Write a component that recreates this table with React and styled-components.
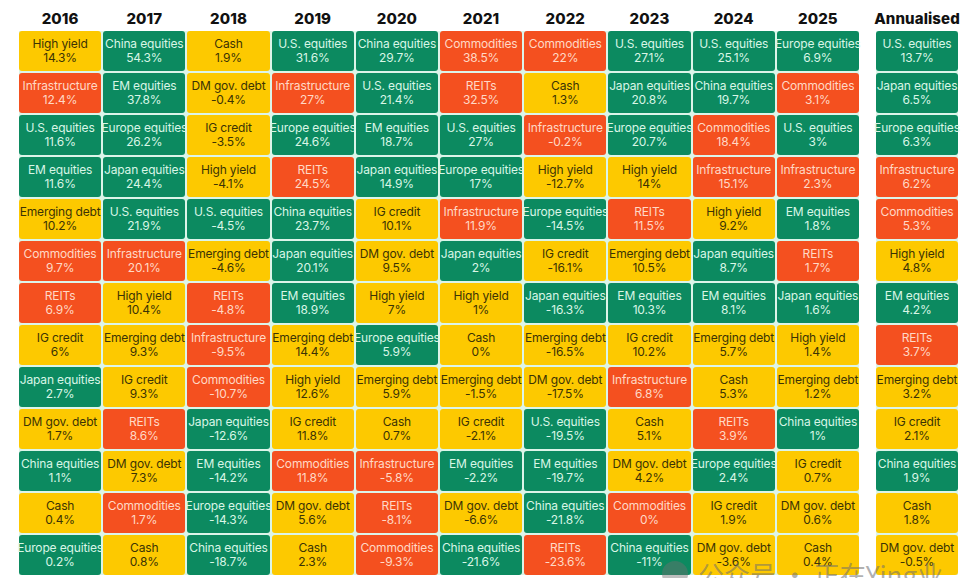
import React from 'react';
import styled, { createGlobalStyle } from 'styled-components';

const GlobalStyle = createGlobalStyle`
  html, body { margin: 0; padding: 0; background: #ffffff; }
  body { font-family: Inter, "Noto Sans", sans-serif; }
`;

const RED = ['Infrastructure', 'Commodities', 'REITs'];
const YELLOW = ['High yield', 'Cash', 'DM gov. debt', 'IG credit', 'Emerging debt'];

const kindOf = (name) => {
  if (RED.includes(name)) return 'red';
  if (YELLOW.includes(name)) return 'yellow';
  return 'green';
};

const parse = (txt) =>
  txt.split(';').map((s) => {
    const [name, value] = s.split('|');
    return { name: name.trim(), value: value.trim() };
  });

const years = [
  ['2016', 'High yield|14.3%;Infrastructure|12.4%;U.S. equities|11.6%;EM equities|11.6%;Emerging debt|10.2%;Commodities|9.7%;REITs|6.9%;IG credit|6%;Japan equities|2.7%;DM gov. debt|1.7%;China equities|1.1%;Cash|0.4%;Europe equities|0.2%'],
  ['2017', 'China equities|54.3%;EM equities|37.8%;Europe equities|26.2%;Japan equities|24.4%;U.S. equities|21.9%;Infrastructure|20.1%;High yield|10.4%;Emerging debt|9.3%;IG credit|9.3%;REITs|8.6%;DM gov. debt|7.3%;Commodities|1.7%;Cash|0.8%'],
  ['2018', 'Cash|1.9%;DM gov. debt|-0.4%;IG credit|-3.5%;High yield|-4.1%;U.S. equities|-4.5%;Emerging debt|-4.6%;REITs|-4.8%;Infrastructure|-9.5%;Commodities|-10.7%;Japan equities|-12.6%;EM equities|-14.2%;Europe equities|-14.3%;China equities|-18.7%'],
  ['2019', 'U.S. equities|31.6%;Infrastructure|27%;Europe equities|24.6%;REITs|24.5%;China equities|23.7%;Japan equities|20.1%;EM equities|18.9%;Emerging debt|14.4%;High yield|12.6%;IG credit|11.8%;Commodities|11.8%;DM gov. debt|5.6%;Cash|2.3%'],
  ['2020', 'China equities|29.7%;U.S. equities|21.4%;EM equities|18.7%;Japan equities|14.9%;IG credit|10.1%;DM gov. debt|9.5%;High yield|7%;Europe equities|5.9%;Emerging debt|5.9%;Cash|0.7%;Infrastructure|-5.8%;REITs|-8.1%;Commodities|-9.3%'],
  ['2021', 'Commodities|38.5%;REITs|32.5%;U.S. equities|27%;Europe equities|17%;Infrastructure|11.9%;Japan equities|2%;High yield|1%;Cash|0%;Emerging debt|-1.5%;IG credit|-2.1%;EM equities|-2.2%;DM gov. debt|-6.6%;China equities|-21.6%'],
  ['2022', 'Commodities|22%;Cash|1.3%;Infrastructure|-0.2%;High yield|-12.7%;Europe equities|-14.5%;IG credit|-16.1%;Japan equities|-16.3%;Emerging debt|-16.5%;DM gov. debt|-17.5%;U.S. equities|-19.5%;EM equities|-19.7%;China equities|-21.8%;REITs|-23.6%'],
  ['2023', 'U.S. equities|27.1%;Japan equities|20.8%;Europe equities|20.7%;High yield|14%;REITs|11.5%;Emerging debt|10.5%;EM equities|10.3%;IG credit|10.2%;Infrastructure|6.8%;Cash|5.1%;DM gov. debt|4.2%;Commodities|0%;China equities|-11%'],
  ['2024', 'U.S. equities|25.1%;China equities|19.7%;Commodities|18.4%;Infrastructure|15.1%;High yield|9.2%;Japan equities|8.7%;EM equities|8.1%;Emerging debt|5.7%;Cash|5.3%;REITs|3.9%;Europe equities|2.4%;IG credit|1.9%;DM gov. debt|-3.6%'],
  ['2025', 'Europe equities|6.9%;Commodities|3.1%;U.S. equities|3%;Infrastructure|2.3%;EM equities|1.8%;REITs|1.7%;Japan equities|1.6%;High yield|1.4%;Emerging debt|1.2%;China equities|1%;IG credit|0.7%;DM gov. debt|0.6%;Cash|0.4%'],
].map(([year, txt]) => ({ year, cells: parse(txt) }));

const annualised = parse(
  'U.S. equities|13.7%;Japan equities|6.5%;Europe equities|6.3%;Infrastructure|6.2%;Commodities|5.3%;High yield|4.8%;EM equities|4.2%;REITs|3.7%;Emerging debt|3.2%;IG credit|2.1%;China equities|1.9%;Cash|1.8%;DM gov. debt|-0.5%'
);

const palette = {
  green: { bg: '#0c8a60', fg: '#d9f6e6' },
  yellow: { bg: '#fdc900', fg: '#3b3305' },
  red: { bg: '#f4501f', fg: '#ffd9c6' },
};

const Page = styled.div`
  position: relative;
  width: 975px;
  height: 578px;
  overflow: hidden;
  display: flex;
  gap: 17px;
  padding-left: 19px;
  box-sizing: border-box;
`;

const Table = styled.div`
  display: flex;
  flex-direction: column;
  flex: none;
  width: ${(p) => p.$width}px;
`;

const HeaderRow = styled.div`
  display: grid;
  grid-template-columns: repeat(${(p) => p.$cols}, minmax(0, 1fr));
  column-gap: 2px;
  height: 31px;
`;

const Heading = styled.div`
  display: flex;
  align-items: center;
  justify-content: center;
  padding-top: 5px;
  font-size: 15px;
  font-weight: 800;
  color: #111;
  white-space: nowrap;
  letter-spacing: 0.1px;
`;

const Body = styled.div`
  display: grid;
  grid-template-columns: repeat(${(p) => p.$cols}, minmax(0, 1fr));
  grid-template-rows: repeat(13, 40px);
  grid-auto-flow: column;
  gap: 2px;
  background: #dcf5e9;
`;

const Cell = styled.div`
  min-width: 0;
  display: flex;
  flex-direction: column;
  align-items: center;
  justify-content: center;
  border-radius: 3px;
  background: ${(p) => palette[p.$kind].bg};
  color: ${(p) => palette[p.$kind].fg};
  font-size: 12px;
  line-height: 14px;
  letter-spacing: -0.15px;
  white-space: nowrap;
  padding-bottom: 1px;
`;

const Watermark = styled.div`
  position: absolute;
  left: 662px;
  top: 555px;
  display: flex;
  align-items: center;
  gap: 10px;
  color: rgba(110, 110, 110, 0.55);
  font-family: "Noto Sans CJK SC", "Noto Sans", sans-serif;
  font-size: 26px;
  white-space: nowrap;
  pointer-events: none;
`;

const Bubble = styled.span`
  width: 26px;
  height: 26px;
  border-radius: 50%;
  background: rgba(110, 110, 110, 0.45);
`;

function Column({ cells }) {
  return cells.map((c, i) => (
    <Cell key={i} $kind={kindOf(c.name)}>
      <span>{c.name}</span>
      <span>{c.value}</span>
    </Cell>
  ));
}

export default function App() {
  return (
    <>
      <GlobalStyle />
      <Page>
        <Table $width={840}>
          <HeaderRow $cols={10}>
            {years.map((y) => (
              <Heading key={y.year}>{y.year}</Heading>
            ))}
          </HeaderRow>
          <Body $cols={10}>
            {years.map((y) => (
              <Column key={y.year} cells={y.cells} />
            ))}
          </Body>
        </Table>
        <Table $width={82}>
          <HeaderRow $cols={1}>
            <Heading>Annualised</Heading>
          </HeaderRow>
          <Body $cols={1}>
            <Column cells={annualised} />
          </Body>
        </Table>
        <Watermark>
          <Bubble />
          <span>公众号 · 正在Ying业</span>
        </Watermark>
      </Page>
    </>
  );
}
